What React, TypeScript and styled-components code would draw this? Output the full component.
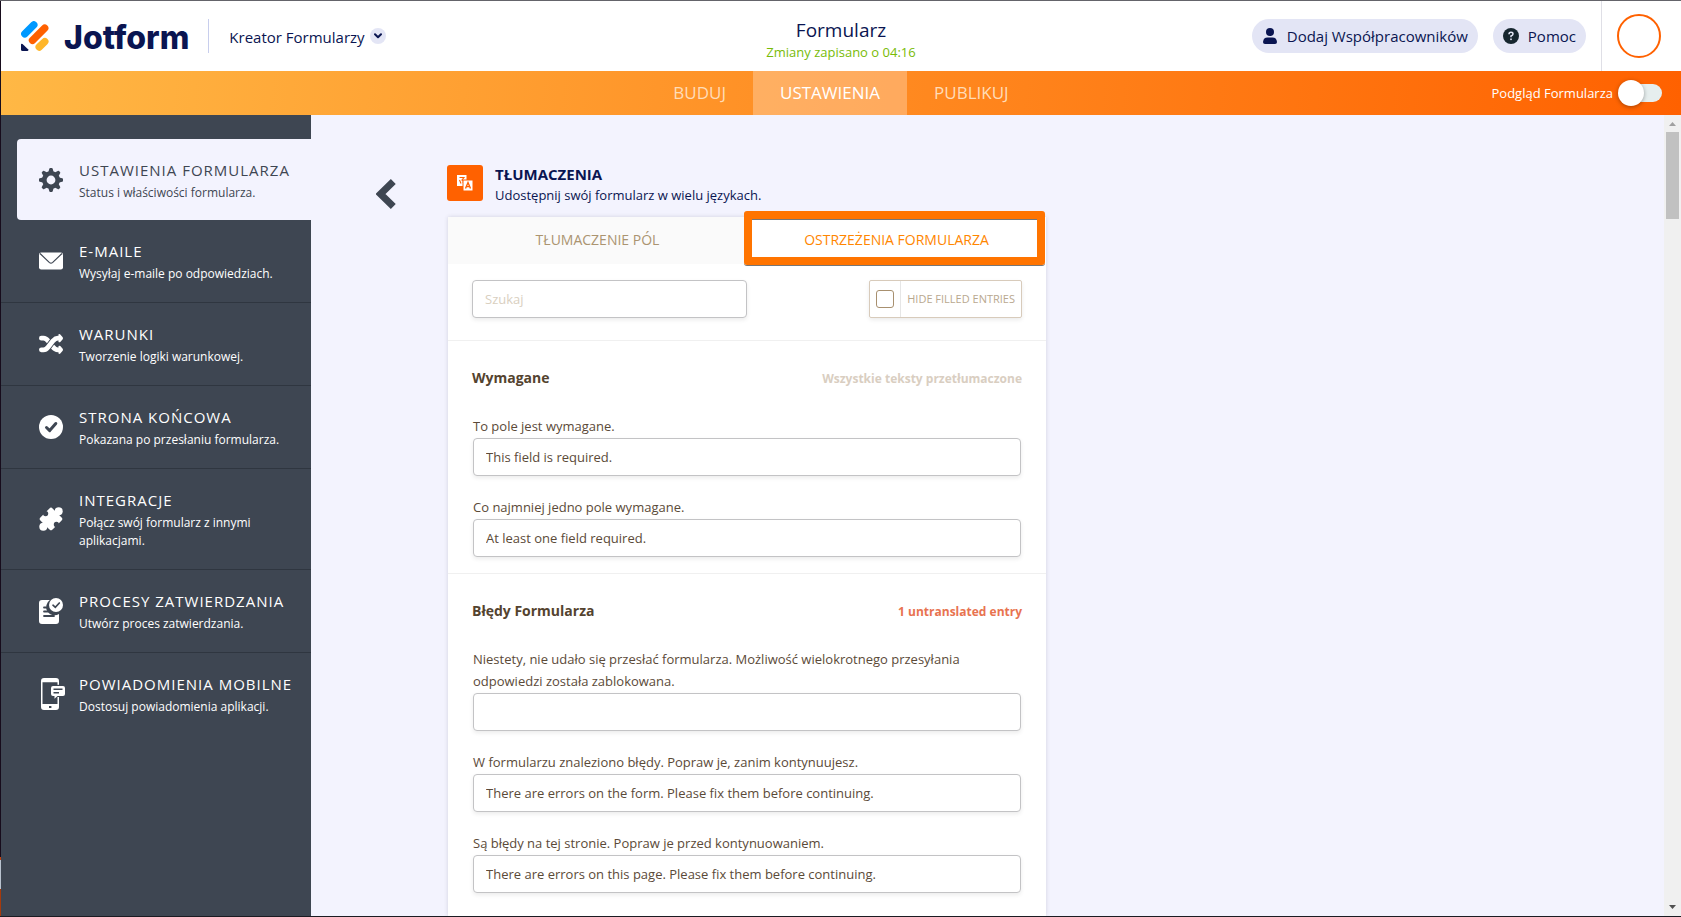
import React from "react";
import styled, { createGlobalStyle, css } from "styled-components";

const Global = createGlobalStyle`
  *, *::before, *::after { box-sizing: border-box; }
  body { margin: 0; background: #f3f3fe; font-family: "Open Sans", "Noto Sans", sans-serif; color: #0a1551; }
  button, input { font: inherit; color: inherit; }
  button { border: 0; background: none; padding: 0; cursor: pointer; }
  h1, h2, h3, p { margin: 0; }
  a { color: inherit; text-decoration: none; }
`;

const Page = styled.div`
  display: flex;
  flex-direction: column;
  height: 100vh;
  min-width: 1200px;
  border-top: 1px solid #64646a;
  border-bottom: 1px solid #1b1b22;
  padding-left: 1px;
  background: linear-gradient(to top, #a63a0c 27px, #b9c3cf 27px 56px, #c2410c 56px 59px, #170c1c 59px);
`;

const Header = styled.header`
  display: grid;
  grid-template-columns: 1fr auto 1fr;
  flex: none;
  height: 70px;
  background: #fff;
`;

const Brand = styled.div`
  display: flex;
  align-items: center;
  padding-left: 20px;
`;

const LogoLink = styled.a`
  display: flex;
  align-items: center;
  gap: 15px;
  font: 800 32px/40px Inter, sans-serif;
`;

const LogoText = styled.span`
  padding-top: 3px;
`;

const ProductButton = styled.button`
  display: flex;
  align-items: center;
  gap: 5px;
  height: 34px;
  margin-left: 19px;
  padding-left: 20px;
  border-left: 1px solid #c8ceed;
  font-size: 15px;
`;

const ProductName = styled.span`
  padding-top: 2px;
`;

const Chevron = styled.span`
  display: flex;
  align-items: center;
  justify-content: center;
  width: 16px;
  height: 16px;
  border-radius: 50%;
  background: #e3e5f5;
`;

const TitleBlock = styled.div`
  display: flex;
  flex-direction: column;
  align-items: center;
  padding-top: 16px;
`;

const FormTitle = styled.h1`
  font-size: 19px;
  line-height: 26px;
  font-weight: 500;
`;

const Saved = styled.p`
  font-size: 13px;
  line-height: 18px;
  color: #78bb07;
`;

const Actions = styled.div`
  display: flex;
  align-items: center;
  justify-content: flex-end;
  gap: 15px;
`;

const Pill = styled.button`
  display: flex;
  align-items: center;
  gap: 9px;
  height: 34px;
  padding: 0 10px;
  border-radius: 17px;
  background: #e3e5f5;
  font-size: 15px;
`;

const Account = styled.div`
  display: flex;
  align-items: center;
  height: 70px;
  padding: 0 20px 0 15px;
  border-left: 1px solid #dfdfe6;
`;

const Avatar = styled.button`
  width: 44px;
  height: 44px;
  border: 2px solid #ff6100;
  border-radius: 50%;
`;

const NavBar = styled.div`
  display: grid;
  grid-template-columns: 1fr auto 1fr;
  flex: none;
  height: 44px;
  background: linear-gradient(95deg, #ffb845, #ff6100);
  color: #fff;
`;

const Nav = styled.nav`
  grid-column: 2;
  display: flex;
`;

const NavLink = styled.a<{ $active?: boolean }>`
  padding: 0 27px;
  font-size: 17px;
  line-height: 44px;
  color: ${(p) => (p.$active ? "#fff" : "#ffdcb8")};
  background: ${(p) => (p.$active ? "rgba(255,255,255,.28)" : "transparent")};
`;

const Preview = styled.label`
  display: flex;
  align-items: center;
  justify-content: flex-end;
  gap: 5px;
  padding-right: 19px;
  font-size: 13px;
`;

const Switch = styled.input`
  appearance: none;
  display: flex;
  align-items: center;
  width: 44px;
  height: 26px;
  margin: 0;
  cursor: pointer;
  &::before {
    content: "";
    z-index: 1;
    flex: none;
    width: 26px;
    height: 26px;
    border-radius: 50%;
    background: #fff;
    box-shadow: 0 1px 4px rgba(0, 0, 0, 0.35);
  }
  &::after {
    content: "";
    flex: none;
    width: 34px;
    height: 18px;
    margin-left: -16px;
    border-radius: 9px;
    background: #e6eeee;
  }
`;

const Body = styled.div`
  display: flex;
  flex: 1;
  min-height: 0;
  background: #f3f3fe;
`;

const Sidebar = styled.nav`
  flex: none;
  width: 310px;
  padding-top: 24px;
  background: #3e4652;
`;

const SideLink = styled.a<{ $active?: boolean }>`
  display: flex;
  align-items: center;
  gap: 16px;
  padding: 19px 16px 19px 38px;
  border-bottom: 1px solid #2f3640;
  color: #fff;
  &:last-child { border-bottom: 0; }
  ${(p) =>
    p.$active &&
    css`
      margin-left: 16px;
      padding: 19px 16px 18px 22px;
      border-bottom: 0;
      border-radius: 4px 0 0 4px;
      background: #f3f3fe;
      color: #3e4652;
    `}
`;

const SideIcon = styled.svg`
  flex: none;
  width: 24px;
  height: 32px;
  overflow: visible;
`;

const SideLabel = styled.span`
  display: grid;
  gap: 2px;
`;

const SideTitle = styled.span`
  font-size: 15px;
  line-height: 24px;
  letter-spacing: 1px;
  white-space: nowrap;
`;

const SideText = styled.span<{ $light?: boolean }>`
  font-size: 12px;
  line-height: 18px;
  font-weight: ${(p) => (p.$light ? 400 : 500)};
`;

const Main = styled.main`
  display: flex;
  flex: 1;
  min-width: 0;
  overflow: hidden;
`;

const Back = styled.button`
  flex: none;
  align-self: flex-start;
  display: flex;
  margin: 64px 51px 0 65px;
`;

const Content = styled.div`
  display: flex;
  flex-direction: column;
  width: 599px;
  padding-top: 50px;
`;

const PanelHead = styled.div`
  display: flex;
  flex: none;
  gap: 12px;
  height: 52px;
`;

const PanelIcon = styled.span`
  display: flex;
  align-items: center;
  justify-content: center;
  width: 36px;
  height: 36px;
  border-radius: 3px;
  background: #ff6100;
`;

const PanelTitle = styled.h2`
  font-size: 15px;
  line-height: 18px;
  font-weight: 700;
`;

const PanelText = styled.p`
  font-size: 13px;
  line-height: 24px;
`;

const Card = styled.section`
  position: relative;
  flex: 1 0 auto;
  margin-left: 1px;
  background: #fff;
  box-shadow: 0 0 4px rgba(60, 60, 80, 0.18);
`;

const Tabs = styled.div`
  display: grid;
  grid-template-columns: 1fr 1fr;
  height: 47px;
`;

const Tab = styled.button<{ $active?: boolean }>`
  padding-bottom: 2px;
  font-size: 14px;
  font-weight: 500;
  color: ${(p) => (p.$active ? "#ff8600" : "#ab9470")};
  background: ${(p) => (p.$active ? "#fff" : "#fafafa")};
`;

const Callout = styled.span`
  position: absolute;
  top: -6px;
  right: 1px;
  width: 301px;
  height: 54px;
  border: 8px solid #ff7400;
  border-radius: 3px;
  box-shadow: 0 1px 0 #777, inset 0 1px 0 #777;
  pointer-events: none;
`;

const Filters = styled.div`
  display: flex;
  justify-content: space-between;
  padding: 16px 24px 22px;
  border-bottom: 1px solid #f0f0f0;
`;

const TextInput = styled.input`
  height: 38px;
  padding: 0 12px;
  border: 1px solid #c3c3c5;
  border-radius: 4px;
  background: #fff;
  box-shadow: 0 2px 4px rgba(0, 0, 0, 0.08);
  font-size: 13px;
  color: #5b4a38;
  &::placeholder { color: #d9cfc0; opacity: 1; }
`;

const Search = styled(TextInput)`
  width: 275px;
`;

const HideFilled = styled.label`
  display: flex;
  align-items: center;
  height: 38px;
  border: 1px solid #d8cbbb;
  border-radius: 2px;
  box-shadow: 0 2px 4px rgba(0, 0, 0, 0.08);
  font-size: 11px;
  font-weight: 500;
  color: #b9a88f;
`;

const TickBox = styled.input`
  appearance: none;
  width: 18px;
  height: 18px;
  margin: 0 6px;
  border: 1px solid #a8906f;
  border-radius: 3px;
`;

const HideText = styled.span`
  padding: 0 6px;
  border-left: 1px solid #e6e6e6;
  line-height: 36px;
`;

const Group = styled.section`
  padding: 26px 25px 16px;
  border-bottom: 1px solid #f0f0f0;
  &:last-child { border-bottom: 0; }
`;

const GroupHead = styled.div`
  display: flex;
  align-items: center;
  justify-content: space-between;
  margin: 0 -1px 26px;
`;

const GroupTitle = styled.h3`
  font-size: 14px;
  line-height: 22px;
  font-weight: 700;
  color: #54432f;
`;

const Status = styled.span<{ $missing?: boolean }>`
  font-size: 12px;
  font-weight: 700;
  color: ${(p) => (p.$missing ? "#e87350" : "#d9cec1")};
`;

const FieldList = styled.div`
  display: grid;
  gap: 20px;
`;

const Field = styled.label`
  display: flex;
  flex-direction: column;
  gap: 1px;
  font-size: 13px;
  line-height: 22px;
  color: #5b4a38;
`;

const Scrollbar = styled.div`
  flex: none;
  display: flex;
  flex-direction: column;
  align-items: center;
  width: 17px;
  background: #f0f0f0;
`;

const ScrollArrow = styled.svg`
  width: 17px;
  height: 17px;
`;

const ScrollThumb = styled.div`
  width: 13px;
  height: 87px;
  background: #c1c1c1;
`;

const ScrollGap = styled.div`
  flex: 1;
`;

const GearIcon = () => (
  <SideIcon viewBox="0 0 24 32" aria-hidden="true">
    <circle cx="12" cy="16" r="6.7" fill="none" stroke="currentColor" strokeWidth="4.6" />
    {[0, 45, 90, 135, 180, 225, 270, 315].map((a) => (
      <path key={a} d="M9.4 8 L10.3 4.8 Q10.5 4 11.3 4 H12.7 Q13.5 4 13.7 4.8 L14.6 8 Z" fill="currentColor" transform={`rotate(${a} 12 16)`} />
    ))}
  </SideIcon>
);

const MailIcon = () => (
  <SideIcon viewBox="0 0 24 32" aria-hidden="true">
    <rect x="0" y="7.5" width="24" height="17" rx="2.2" fill="currentColor" />
    <path d="M1 8.500 L10.500 17.600 Q12 18.800 13.500 17.600 L23 8.500" fill="none" stroke="#3e4652" strokeWidth="1.2" />
  </SideIcon>
);

const ShuffleIcon = () => (
  <SideIcon viewBox="0 0 24 32" aria-hidden="true">
    <g fill="none" stroke="currentColor" strokeWidth="4.8">
      <path d="M2.400 10.200 H4.500 Q7 10.200 9 12.800 L13 18 Q16 21.800 19 21.800 H20" strokeLinecap="round" />
      <path d="M7 21 Q8 20.400 9 19.200 L14 12.800 Q15.500 11 17 10.500" stroke="#3e4652" strokeWidth="6.6" />
      <path d="M2.400 21.800 H4.500 Q7 21.800 9 19.200 L14 12.800 Q16.500 10.200 19 10.200 H20" strokeLinecap="round" />
    </g>
    <path d="M19.500 6.300 Q20.500 5.600 21.300 6.400 L23.700 9.200 Q24.300 10.200 23.700 11.200 L21.300 14 Q20.500 14.700 19.500 14Z M19.500 18 Q20.500 17.300 21.300 18 L23.700 20.800 Q24.300 21.800 23.700 22.800 L21.300 25.600 Q20.500 26.200 19.500 25.600Z" fill="currentColor" />
  </SideIcon>
);

const CheckIcon = () => (
  <SideIcon viewBox="0 0 24 32" aria-hidden="true">
    <circle cx="12" cy="16" r="12" fill="currentColor" />
    <path d="M7.500 16.500 L10.700 19.600 L16.800 12.500" fill="none" stroke="#3e4652" strokeWidth="3" strokeLinecap="round" strokeLinejoin="round" />
  </SideIcon>
);

const PuzzleIcon = () => (
  <SideIcon viewBox="0 0 24 32" aria-hidden="true">
    <g fill="currentColor">
      <rect x="3.4" y="7.4" width="17.2" height="17.2" rx="2.2" transform="rotate(45 12 16)" />
      <circle cx="19.7" cy="8.3" r="4" />
      <circle cx="4.3" cy="23.7" r="4" />
    </g>
    <g fill="#3e4652">
      <circle cx="6.6" cy="10.6" r="2.6" />
      <circle cx="17.4" cy="21.4" r="2.6" />
    </g>
  </SideIcon>
);

const ApprovalIcon = () => (
  <SideIcon viewBox="0 0 24 32" aria-hidden="true">
    <path d="M3 5 H11 A8 8 0 0 0 20 19 V26 Q20 29 17 29 H3 Q0 29 0 26 V8 Q0 5 3 5Z" fill="currentColor" />
    <path d="M5 12.500 H9 M5 16.500 H11 M5 21 H15" stroke="#3e4652" strokeWidth="1.8" strokeLinecap="round" />
    <circle cx="17" cy="10" r="7.8" fill="#3e4652" />
    <circle cx="17" cy="10" r="7" fill="currentColor" />
    <path d="M14 10.200 L16.300 12.300 L20.300 8" fill="none" stroke="#3e4652" strokeWidth="1.7" strokeLinecap="round" />
  </SideIcon>
);

const MobileIcon = () => (
  <SideIcon viewBox="-2 0 24 32" aria-hidden="true">
    <path fill="currentColor" fillRule="evenodd" d="M3 0 H15 Q18 0 18 3 V29 Q18 32 15 32 H3 Q0 32 0 29 V3 Q0 0 3 0Z M1.500 4.200 V26 H16.500 V4.200Z" />
    <rect x="8" y="28" width="2.4" height="2" fill="#3e4652" />
    <path d="M9 6.800 H19 V21 H9Z" fill="#3e4652" />
    <path d="M16.500 21 H18 V19 H16.500Z" fill="currentColor" />
    <path d="M12 8 H22 Q24 8 24 10 V16 Q24 18 22 18 H16.500 L13.500 20.800 V18 H12 Q10 18 10 16 V10 Q10 8 12 8Z" fill="currentColor" />
    <path d="M12.500 11.300 H21.500 M12.500 14.700 H18" stroke="#3e4652" strokeWidth="1.5" />
  </SideIcon>
);

const LogoMark = () => (
  <svg width="28" height="30" viewBox="0 0 28 30" aria-hidden="true">
    <g fill="none" strokeWidth="7.4" strokeLinecap="round">
      <path d="M3.800 12.800 L12.800 3.900" stroke="#0099ff" />
      <path d="M11.500 19.300 L23.700 7.200" stroke="#ff6100" />
      <path d="M18.200 26 L23.800 20.600" stroke="#ffb629" />
    </g>
    <path d="M0 23.800 Q0 22 1.500 23 L7 28.300 Q8 30 6.500 30 H1.600 Q0 30 0 28.400Z" fill="#0a1551" />
  </svg>
);

const sideItems = [
  { title: "USTAWIENIA FORMULARZA", text: "Status i właściwości formularza.", Icon: GearIcon, active: true },
  { title: "E-MAILE", text: "Wysyłaj e-maile po odpowiedziach.", Icon: MailIcon },
  { title: "WARUNKI", text: "Tworzenie logiki warunkowej.", Icon: ShuffleIcon },
  { title: "STRONA KOŃCOWA", text: "Pokazana po przesłaniu formularza.", Icon: CheckIcon },
  { title: "INTEGRACJE", text: "Połącz swój formularz z innymi aplikacjami.", Icon: PuzzleIcon },
  { title: "PROCESY ZATWIERDZANIA", text: "Utwórz proces zatwierdzania.", Icon: ApprovalIcon },
  { title: "POWIADOMIENIA MOBILNE", text: "Dostosuj powiadomienia aplikacji.", Icon: MobileIcon },
];

const groups = [
  {
    title: "Wymagane",
    status: "Wszystkie teksty przetłumaczone",
    missing: false,
    fields: [
      ["To pole jest wymagane.", "This field is required."],
      ["Co najmniej jedno pole wymagane.", "At least one field required."],
    ],
  },
  {
    title: "Błędy Formularza",
    status: "1 untranslated entry",
    missing: true,
    fields: [
      ["Niestety, nie udało się przesłać formularza. Możliwość wielokrotnego przesyłania odpowiedzi została zablokowana.", ""],
      ["W formularzu znaleziono błędy. Popraw je, zanim kontynuujesz.", "There are errors on the form. Please fix them before continuing."],
      ["Są błędy na tej stronie. Popraw je przed kontynuowaniem.", "There are errors on this page. Please fix them before continuing."],
    ],
  },
];

export default function App() {
  return (
    <Page>
      <Global />
      <Header>
        <Brand>
          <LogoLink href="#">
            <LogoMark />
            <LogoText>Jotform</LogoText>
          </LogoLink>
          <ProductButton>
            <ProductName>Kreator Formularzy</ProductName>
            <Chevron>
              <svg width="8" height="6" viewBox="0 0 8 6" aria-hidden="true">
                <path d="M1 1.200 L4 4.200 L7 1.200" fill="none" stroke="#0a1551" strokeWidth="2" strokeLinecap="round" strokeLinejoin="round" />
              </svg>
            </Chevron>
          </ProductButton>
        </Brand>
        <TitleBlock>
          <FormTitle>Formularz</FormTitle>
          <Saved>Zmiany zapisano o 04:16</Saved>
        </TitleBlock>
        <Actions>
          <Pill>
            <svg width="16" height="16" viewBox="0 0 16 16" aria-hidden="true">
              <circle cx="8" cy="4" r="4" fill="#0a1551" />
              <path d="M1 14 Q1.500 9.600 5.500 9.600 H10.500 Q14.500 9.600 15 14 Q15 16 13 16 H3 Q1 16 1 14Z" fill="#0a1551" />
            </svg>
            Dodaj Współpracowników
          </Pill>
          <Pill>
            <svg width="16" height="16" viewBox="0 0 16 16" aria-hidden="true">
              <circle cx="8" cy="8" r="8" fill="#16262f" />
              <path d="M6 6.200 Q6 4.300 8 4.300 Q10 4.300 10 6 Q10 7.200 8 8 V9.200" fill="none" stroke="#e3e5f5" strokeWidth="1.5" />
              <rect x="7.2" y="10.5" width="1.6" height="1.6" fill="#e3e5f5" />
            </svg>
            Pomoc
          </Pill>
          <Account>
            <Avatar aria-label="Konto" />
          </Account>
        </Actions>
      </Header>

      <NavBar>
        <Nav>
          <NavLink href="#">BUDUJ</NavLink>
          <NavLink href="#" $active>USTAWIENIA</NavLink>
          <NavLink href="#">PUBLIKUJ</NavLink>
        </Nav>
        <Preview>
          Podgląd Formularza
          <Switch type="checkbox" role="switch" />
        </Preview>
      </NavBar>

      <Body>
        <Sidebar>
          {sideItems.map(({ title, text, Icon, active }) => (
            <SideLink key={title} href="#" $active={active}>
              <Icon />
              <SideLabel>
                <SideTitle>{title}</SideTitle>
                <SideText $light={active}>{text}</SideText>
              </SideLabel>
            </SideLink>
          ))}
        </Sidebar>

        <Main>
          <Back aria-label="Wstecz">
            <svg width="20" height="30" viewBox="0 0 20 30" aria-hidden="true">
              <path d="M17.300 2.500 L4.500 15 L17.300 27.500" fill="none" stroke="#3e4652" strokeWidth="7" />
            </svg>
          </Back>
          <Content>
            <PanelHead>
              <PanelIcon>
                <svg width="16" height="16" viewBox="0 0 16 16" aria-hidden="true">
                  <rect x="0" y="0" width="9.5" height="11" fill="#fff" />
                  <path d="M2.500 2.500 H7 L5 5 Q7 5.500 6 8 M2.500 5 L4 8.500" fill="none" stroke="#ff6100" strokeWidth="1.1" />
                  <rect x="6" y="5" width="10" height="11" fill="#fff" stroke="#ff6100" strokeWidth="1" />
                  <path d="M8.500 13.500 L11 7.500 L13.500 13.500 M9.500 11.600 H12.500" fill="none" stroke="#ff6100" strokeWidth="1.4" />
                </svg>
              </PanelIcon>
              <div>
                <PanelTitle>TŁUMACZENIA</PanelTitle>
                <PanelText>Udostępnij swój formularz w wielu językach.</PanelText>
              </div>
            </PanelHead>
            <Card>
              <Tabs>
                <Tab>TŁUMACZENIE PÓL</Tab>
                <Tab $active>OSTRZEŻENIA FORMULARZA</Tab>
              </Tabs>
              <Callout />
              <Filters>
                <Search type="search" placeholder="Szukaj" aria-label="Szukaj" />
                <HideFilled>
                  <TickBox type="checkbox" />
                  <HideText>HIDE FILLED ENTRIES</HideText>
                </HideFilled>
              </Filters>
              {groups.map((g) => (
                <Group key={g.title}>
                  <GroupHead>
                    <GroupTitle>{g.title}</GroupTitle>
                    <Status $missing={g.missing}>{g.status}</Status>
                  </GroupHead>
                  <FieldList>
                    {g.fields.map(([label, value]) => (
                      <Field key={label}>
                        {label}
                        <TextInput type="text" defaultValue={value} />
                      </Field>
                    ))}
                  </FieldList>
                </Group>
              ))}
            </Card>
          </Content>
        </Main>

        <Scrollbar aria-hidden="true">
          <ScrollArrow viewBox="0 0 17 17"><path d="M5 11 L8.500 7 L12 11Z" fill="#a0a0a0" /></ScrollArrow>
          <ScrollThumb />
          <ScrollGap />
          <ScrollArrow viewBox="0 0 17 17"><path d="M5 6 L8.500 10 L12 6Z" fill="#505050" /></ScrollArrow>
        </Scrollbar>
      </Body>
    </Page>
  );
}
